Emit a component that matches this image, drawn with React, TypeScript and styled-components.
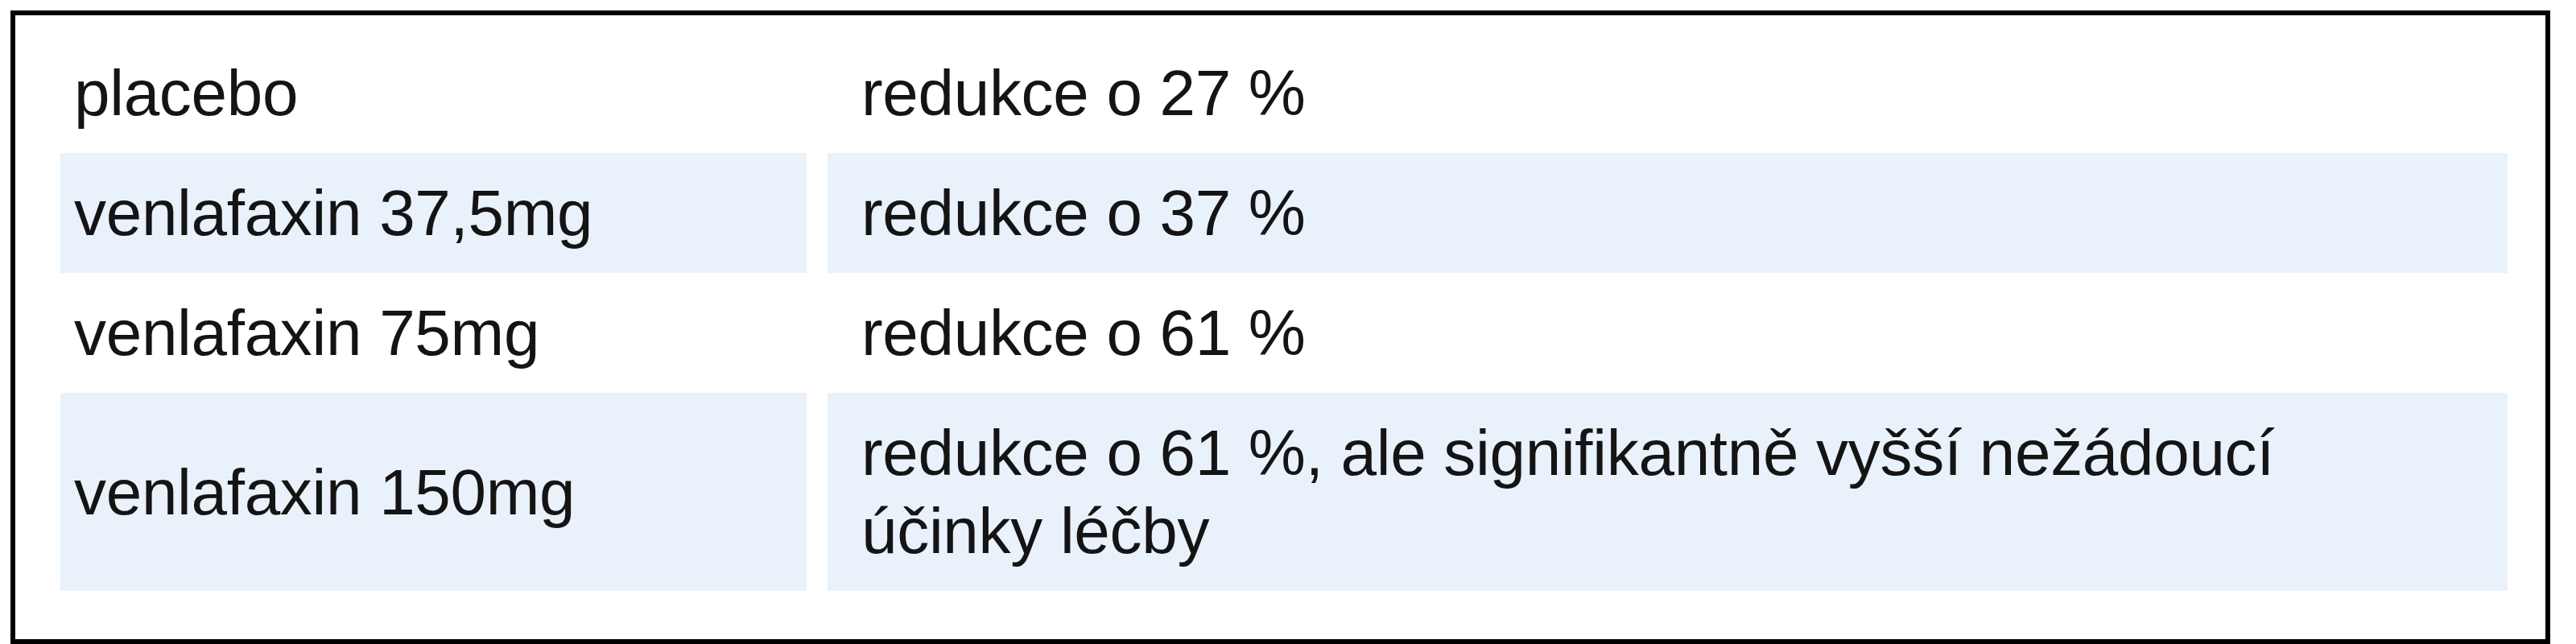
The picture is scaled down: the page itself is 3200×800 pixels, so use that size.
import * as React from "react";
import styled, { createGlobalStyle } from "styled-components";

type Row = {
  dose: string;
  effect: React.ReactNode;
};

const GlobalStyle = createGlobalStyle`
  html, body {
    margin: 0;
    padding: 0;
    background: #ffffff;
  }
  body {
    font-family: "Liberation Sans", Arial, sans-serif;
    color: #141414;
  }
`;

const Frame = styled.div`
  box-sizing: border-box;
  width: 3155px;
  height: 787px;
  margin: 13px 0 0 13px;
  border: 6px solid #000000;
  padding: 22px 47px 0 56px;
  background: #ffffff;
`;

const Table = styled.div`
  display: flex;
  flex-direction: column;
`;

const TableRow = styled.div`
  display: grid;
  grid-template-columns: 927px 1fr;
  column-gap: 26px;
`;

const Cell = styled.div<{ $shaded: boolean; $indent: number }>`
  display: flex;
  align-items: center;
  padding: 26px 0 26px ${(props) => props.$indent}px;
  font-size: 80px;
  line-height: 97px;
  letter-spacing: -0.3px;
  background: ${(props) => (props.$shaded ? "#e9f1fa" : "transparent")};
`;

const rows: Row[] = [
  { dose: "placebo", effect: "redukce o 27 %" },
  { dose: "venlafaxin 37,5mg", effect: "redukce o 37 %" },
  { dose: "venlafaxin 75mg", effect: "redukce o 61 %" },
  {
    dose: "venlafaxin 150mg",
    effect: (
      <span>
        redukce o 61 %, ale signifikantně vyšší nežádoucí
        <br />
        účinky léčby
      </span>
    ),
  },
];

const App: React.FC = () => {
  return (
    <>
      <GlobalStyle />
      <Frame>
        <Table>
          {rows.map((row, index) => {
            const shaded = index % 2 === 1;
            return (
              <TableRow key={index}>
                <Cell $shaded={shaded} $indent={17}>
                  {row.dose}
                </Cell>
                <Cell $shaded={shaded} $indent={42}>
                  {row.effect}
                </Cell>
              </TableRow>
            );
          })}
        </Table>
      </Frame>
    </>
  );
};

export default App;
